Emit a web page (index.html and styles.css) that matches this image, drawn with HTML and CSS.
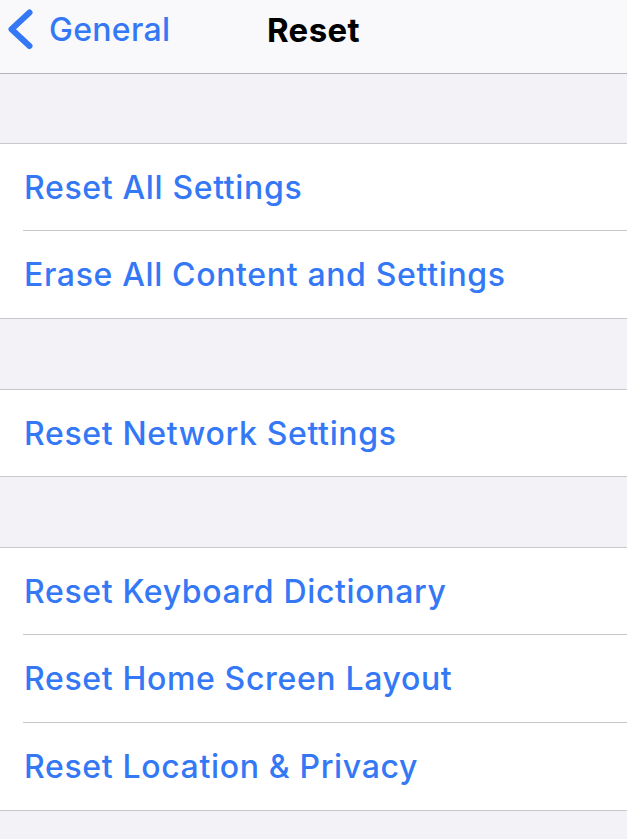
FILE: index.html
```html
<!DOCTYPE html>
<html>
<head>
<meta charset="utf-8">
<link rel="stylesheet" href="styles.css">
</head>
<body>
<div class="nav">
  <div class="back">
    <svg class="chev" width="30" height="44" viewBox="0 0 30 44"><path d="M23.5 4.5 L5.5 21.3 L23.5 38" fill="none" stroke="#3478f6" stroke-width="6" stroke-linecap="round" stroke-linejoin="round"/></svg>
    <span class="back-label">General</span>
  </div>
  <div class="title">Reset</div>
</div>
<div class="gap first"></div>
<div class="group">
  <div class="row"><span class="label">Reset All Settings</span></div>
  <div class="row last"><span class="label">Erase All Content and Settings</span></div>
</div>
<div class="gap"></div>
<div class="group">
  <div class="row last short"><span class="label">Reset Network Settings</span></div>
</div>
<div class="gap"></div>
<div class="group">
  <div class="row"><span class="label">Reset Keyboard Dictionary</span></div>
  <div class="row tall"><span class="label">Reset Home Screen Layout</span></div>
  <div class="row last"><span class="label">Reset Location &amp; Privacy</span></div>
</div>
</body>
</html>
```
FILE: styles.css
```css
html, body {
  margin: 0;
  padding: 0;
  background: #f2f2f7;
  font-family: Inter, "Liberation Sans", sans-serif;
  overflow: hidden;
}
.nav {
  height: 73px;
  background: #f9f9fb;
  border-bottom: 1px solid #b4b4b8;
  position: relative;
}
.back {
  display: flex;
  align-items: center;
  padding-left: 6px;
  padding-top: 8px;
  gap: 13px;
}
.chev { display: block; }
.back-label {
  color: #3478f6;
  font-size: 32px;
  font-weight: 500;
  line-height: 44px;
  letter-spacing: 0.3px;
}
.title {
  position: absolute;
  left: 0;
  right: 0;
  top: 8px;
  line-height: 44px;
  text-align: center;
  font-size: 33px;
  font-weight: 700;
  letter-spacing: 0.4px;
  color: #000;
}
.gap { height: 70px; }
.gap.first { height: 69px; }
.group {
  background: #fff;
  border-top: 1px solid #c8c7cc;
  border-bottom: 1px solid #c8c7cc;
}
.row {
  height: 87px;
  box-sizing: border-box;
  margin-left: 23px;
  border-bottom: 1px solid #c8c7cc;
  display: flex;
  align-items: center;
}
.row.last { border-bottom: none; }
.row.short { height: 86px; }
.row.tall { height: 88px; }
.label {
  color: #3478f6;
  font-size: 32px;
  font-weight: 500;
  padding-left: 1px;
  letter-spacing: 0.65px;
}
```
